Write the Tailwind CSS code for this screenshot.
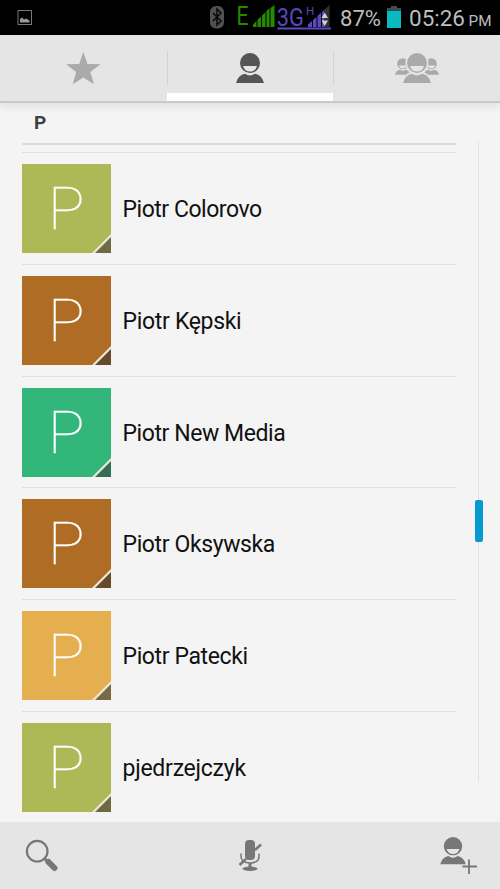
<!DOCTYPE html>
<html lang="en">
<head>
<meta charset="utf-8">
<title>Contacts</title>
<script src="https://cdn.jsdelivr.net/npm/@tailwindcss/browser@4"></script>
</head>
<body class="bg-[#f4f4f4] font-[Roboto,sans-serif]">
<svg class="hidden">
  <symbol id="person" viewBox="0 0 28 30">
    <circle cx="14" cy="10" r="10"/>
    <path class="fill-[#e5e5e5]" d="M7 13H21Q19.500 18.500 14 18.500Q8.500 18.500 7 13Z"/>
    <path d="M0 30Q2 22 9 20.800Q14 24.200 19 20.800Q26 22 28 30Z"/>
  </symbol>
</svg>
<div class="flex h-[889px] w-[500px] flex-col overflow-hidden">
  <header class="flex h-[35px] shrink-0 bg-black">
    <svg class="ml-[17px] mt-[10px] h-[15px] w-[15px]" viewBox="0 0 15 15"><rect x="1" y=".5" width="13.500" height="14" fill="none" stroke="#777"/><path d="M3 12.500V9L5 7.500L7 9.500L9 8.500L12.500 10.500V12.500Z" fill="#999"/></svg>
    <svg class="ml-[178px] h-[35px] w-[14px]" viewBox="0 0 14 35"><rect y="6" width="14" height="22.500" rx="6" fill="#505050"/><path d="M3 13L11 21L7 25V9L11 13L3 21" fill="none" stroke="#080808" stroke-width="1.500"/></svg>
    <svg class="ml-[13px] h-[35px] w-[38px]" viewBox="0 0 38 35"><text x="-.5" y="25" font-size="25" textLength="12" lengthAdjust="spacingAndGlyphs" fill="#258a00">E</text><path d="M16 27V24.500L19.500 21V27ZM20.500 27V20L24 16.500V27ZM25 27V15.500L28.500 12V27ZM29.500 27V11L32.500 8V27ZM33.500 27V8L37.500 5V27Z" fill="#258a00"/></svg>
    <svg class="ml-[1px] h-[35px] w-[56px]" viewBox="0 0 56 35"><rect x="1.500" y="27.500" width="53.500" height="2" fill="#5c48c4"/><text x="1" y="25.700" transform="scale(.85 1)" font-size="25.500" fill="#5746bd">3G</text><text x="30" y="15" font-size="11.500" fill="#5746bd">H</text><path d="M48 27V10L53.500 5V27Z" fill="#333"/><path d="M32 27V24.500L36 21V27ZM37 27V20L40.500 17V27ZM41.500 27V16L45 12.500V27ZM46 27V12L48 10V27Z" fill="#5a49c0"/><path d="M45.500 18L48.700 12.500L52 18ZM45.500 20.500L48.700 26L52 20.500Z" fill="#d0d0d0"/></svg>
    <svg class="ml-[7px] h-[35px] w-[42px]" viewBox="0 0 42 35"><text x="1" y="26" font-size="22.500" textLength="41" lengthAdjust="spacingAndGlyphs" fill="#bdbdbd">87%</text></svg>
    <svg class="ml-[6px] h-[35px] w-[14px]" viewBox="0 0 14 35"><path d="M0 10V8H4V6H10V8H14V10Z" fill="#484848"/><rect y="10.500" width="14" height="17.500" fill="#08b9c0"/></svg>
    <svg class="ml-[8px] h-[35px] w-[84px]" viewBox="0 0 84 35"><text x="0" y="26" font-size="22.500" textLength="56" lengthAdjust="spacingAndGlyphs" fill="#bdbdbd">05:26</text><text x="59.500" y="26" font-size="15.500" textLength="23" lengthAdjust="spacingAndGlyphs" fill="#bdbdbd">PM</text></svg>
  </header>
  <nav class="relative z-10 flex h-[68px] shrink-0 items-start border-b-2 border-[#c9c9c9] bg-[#e5e5e5] shadow-[0_4px_8px_#00000014]">
    <div class="flex h-[66px] w-[167px] justify-center"><svg class="mt-[17px] h-[33px] w-[35px]" viewBox="0 0 35 33"><path d="M17.300 0L21.500 12L34.500 12.300L24.300 20L28 32.300L17.300 25.500L6.800 32.300L10.200 20L0 12.300L13.200 12Z" fill="#aaa"/></svg></div>
    <div class="relative flex h-[66px] w-[166px] justify-center border-b-8 border-white"><i class="absolute left-0 top-[16px] h-[34px] w-px bg-[#d3d3d3]"></i><svg class="mt-[18px] h-[30px] w-[28px] fill-[#555]"><use href="#person"/></svg></div>
    <div class="relative flex h-[66px] w-[167px] justify-center"><i class="absolute left-0 top-[16px] h-[34px] w-px bg-[#d3d3d3]"></i><svg class="mt-[17px] h-[32px] w-[44px] fill-[#aaa]" viewBox="0 0 44 32"><use href="#person" x="0" y="6" width="15.500" height="17"/><use href="#person" x="28.500" y="6" width="15.500" height="17"/><circle cx="22" cy="11" r="11.500" fill="#e5e5e5"/><path d="M7 32Q8 22 16 20H28Q36 22 37 32" fill="#e5e5e5"/><use href="#person" x="8" y="1" width="28" height="30"/></svg></div>
  </nav>
  <main class="relative h-[719px] shrink-0 overflow-hidden pl-[22px]">
    <h2 class="h-[42px] w-[434px] border-b-2 border-[#d9dbdb] pl-[12px] pt-[7px] text-[19px] font-bold leading-[26px] text-[#404040]">P</h2>
    <ul id="contacts" class="mt-[7px] w-[434px]"></ul>
    <div class="absolute left-[478px] top-[39px] h-[640px] w-px bg-[#e2e2e2]"></div>
    <div class="absolute left-[475px] top-[397px] h-[42px] w-[8px] rounded-[2px] bg-[#059bd2]"></div>
  </main>
  <footer class="flex h-[67px] shrink-0 bg-[#e5e5e5]">
    <svg class="ml-[25px] mt-[17px] h-[34px] w-[34px]" viewBox="0 0 34 34" fill="none" stroke="#777"><circle cx="12.200" cy="12.200" r="10.300" stroke-width="2.200"/><path d="M19 19L23 23" stroke-width="3"/><path d="M23.500 23L29.500 29" stroke-width="6" stroke-linecap="round"/></svg>
    <svg class="ml-[179px] mt-[17px] h-[34px] w-[24px]" viewBox="0 0 24 34" fill="none" stroke="#777"><rect x="7" y="1" width="10" height="20" rx="4" fill="#777" stroke="none"/><path d="M3 14.500V17Q3 24 12 24Q21 24 21 17V14.500" stroke-width="1.500"/><path d="M12 24V29" stroke-width="3"/><ellipse cx="12" cy="29.800" rx="7.600" ry="2.200" fill="#777" stroke="none"/><path d="M1.500 26L8 20M17 11L23 5.500" stroke-width="2.500"/></svg>
    <svg class="ml-[178px] mt-[14px] h-[38px] w-[38px] fill-[#777]" viewBox="0 0 38 38"><use href="#person" x="0" y="1" width="26" height="27.500"/><path d="M29 23.500V38M22.500 30.500H37" stroke="#777" stroke-width="1.800"/></svg>
  </footer>
</div>
<template id="row">
  <li class="flex h-[111.8px] border-t border-[#dfdfdf] pt-[11px]">
    <svg class="h-[89px] w-[89px]" viewBox="0 0 89 89"><rect width="89" height="89"/><text x="26" y="65" font-size="59" font-weight="100" fill="#fff" stroke="#fff" stroke-width=".3" textLength="36.500" lengthAdjust="spacingAndGlyphs">P</text><path d="M70 89L89 70V89Z" fill="#eee9de"/><path d="M73 89L89 73V89Z" class="fold"/></svg>
    <span class="ml-[11.5px] mt-[31px] whitespace-nowrap text-[23px] leading-[30px] text-[#111]"></span>
  </li>
</template>
<script>
[["Piotr Colorovo","#adb857","#706a43",-.47],["Piotr Kępski","#ae6c24","#654a2c",-.31],["Piotr New Media","#33b67a","#356e52",-.43],["Piotr Oksywska","#ae6c24","#654a2c",-.38],["Piotr Patecki","#e5af50","#766b43",-.38],["pjedrzejczyk","#adb857","#706a43",-.25]].forEach(([name,color,fold,tracking])=>{
  const row=document.getElementById("row").content.cloneNode(true);
  row.querySelector("rect").setAttribute("fill",color);
  row.querySelector(".fold").setAttribute("fill",fold);
  const label=row.querySelector("span");
  label.textContent=name;
  label.style.letterSpacing=tracking+"px";
  document.getElementById("contacts").append(row);
});
</script>
</body>
</html>
